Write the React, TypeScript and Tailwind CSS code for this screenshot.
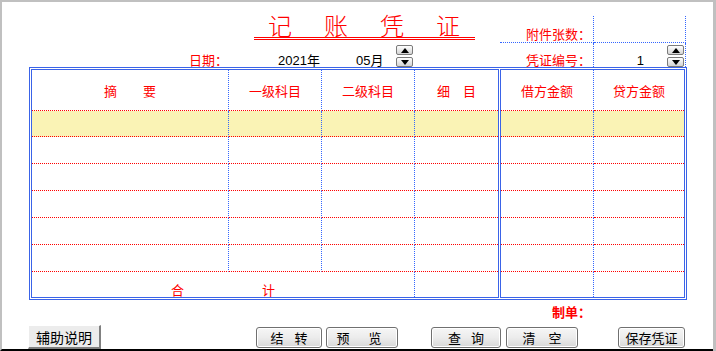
import React from "react";

// little up/down spinner used next to the month and the voucher number
function SpinBtn({ up }: { up?: boolean }) {
  return (
    <div className="h-[10px] w-[17px] rounded-[2px] border border-[#7a7a7a] bg-linear-to-b from-white to-[#d4d4d4] flex items-center justify-center">
      <svg width="8" height="5" viewBox="0 0 8 5">
        {up ? (
          <polygon points="0,5 8,5 4,0" fill="#000" />
        ) : (
          <polygon points="0,0 8,0 4,5" fill="#000" />
        )}
      </svg>
    </div>
  );
}

function Spin() {
  return (
    <div className="flex flex-col justify-between h-[22px] w-[17px]">
      <SpinBtn up />
      <SpinBtn />
    </div>
  );
}

function Btn({
  a,
  b,
  gap,
  w,
  ml,
  pr = "",
}: {
  a: string;
  b?: string;
  gap: string;
  w: string;
  ml: string;
  pr?: string;
}) {
  return (
    <button
      className={`${ml} ${w} mt-[2px] h-[21px] rounded-[3px] border border-[#707070] bg-linear-to-b from-[#f6f6f6] via-[#ececec] to-[#d8d8d8] shadow-[inset_0_0_0_1px_#ffffff] flex items-center justify-center pt-px text-[13px] leading-[13px] text-black ${gap} ${pr}`}
    >
      <span>{a}</span>
      {b && <span>{b}</span>}
    </button>
  );
}

const rowLine = "border-b border-dotted border-b-[#ff0000]";
const colLine = "border-r border-dotted border-r-[#3366ff]";

export default function App() {
  const bodyRows = [0, 1, 2, 3, 4, 5];

  return (
    <div className="w-[716px] h-[351px] flex bg-white font-['Liberation_Sans','Noto_Sans_CJK_SC',sans-serif] overflow-hidden">
      <div className="w-[713px] h-full flex flex-col border-t-2 border-l-2 border-t-[#c0c0c0] border-l-[#c0c0c0] border-b-2 border-b-black">
        {/* header */}
        <div className="flex h-[65px] shrink-0">
          <div className="w-[498px] flex flex-col">
            <div className="ml-[252px] mt-[13px] w-[221px] h-[25px] border-b-[3px] border-double border-[#ff0000] pl-[14px] text-[24px] leading-[24px] tracking-[32px] font-light text-[#ff0000] whitespace-nowrap">
              记账凭证
            </div>
            <div className="mt-[5px] h-[22px] flex items-end text-[13px] leading-[13px]">
              <span className="ml-[187px] w-[89px] text-[#ff0000]">日期：</span>
              <span className="w-[78px] text-black">2021年</span>
              <span className="w-[40px] text-black">05月</span>
              <Spin />
            </div>
          </div>

          <div className="mt-[14px] w-[186px] h-[51px] grid grid-cols-[94px_92px] grid-rows-[27px_24px] text-[13px] leading-[13px]">
            <div className={`${colLine} border-b border-b-[#3366ff] flex items-end pb-px pl-[26px] text-[#ff0000]`}>
              附件张数：
            </div>
            <div className={`${colLine} border-b border-b-[#3366ff]`} />
            <div className={`${colLine} flex items-end pl-[26px] text-[#ff0000]`}>
              凭证编号：
            </div>
            <div className={`${colLine} flex items-end`}>
              <span className="w-[50px] text-right text-black">1</span>
              <div className="ml-[23px]">
                <Spin />
              </div>
            </div>
          </div>
        </div>

        {/* voucher table */}
        <div className="ml-[27px] w-[658px] h-[233px] shrink-0 border border-[#3a63e8] p-px flex gap-px text-[13px] leading-[13px] text-[#ff0000]">
          <div className="w-[468px] h-full border border-[#3a63e8] grid grid-cols-[197px_93px_93px_83px] grid-rows-[41px_26px_27px_27px_27px_27px_27px_25px]">
            <div className={`${colLine} ${rowLine} flex items-center justify-center pt-[2px]`}>摘　　要</div>
            <div className={`${colLine} ${rowLine} flex items-center justify-center pt-[2px]`}>一级科目</div>
            <div className={`${colLine} ${rowLine} flex items-center justify-center pt-[2px]`}>二级科目</div>
            <div className={`${rowLine} flex items-center justify-center pt-[2px]`}>细　目</div>

            {bodyRows.map((r) => (
              <React.Fragment key={r}>
                <div className={`${colLine} ${rowLine} ${r === 0 ? "bg-[#faf3b5]" : ""}`} />
                <div className={`${colLine} ${rowLine} ${r === 0 ? "bg-[#faf3b5]" : ""}`} />
                <div className={`${colLine} ${rowLine} ${r === 0 ? "bg-[#faf3b5]" : ""}`} />
                <div className={`${rowLine} ${r === 0 ? "bg-[#faf3b5]" : ""}`} />
              </React.Fragment>
            ))}

            <div className={`col-span-3 ${colLine} overflow-hidden flex justify-center gap-[78px] pt-[12px]`}>
              <span>合</span>
              <span>计</span>
            </div>
            <div />
          </div>

          <div className="w-[185px] h-full border border-[#3a63e8] grid grid-cols-[93px_90px] grid-rows-[41px_26px_27px_27px_27px_27px_27px_25px]">
            <div className={`${colLine} ${rowLine} flex items-center justify-center pt-[2px]`}>借方金额</div>
            <div className={`${rowLine} flex items-center justify-center pt-[2px]`}>贷方金额</div>

            {bodyRows.map((r) => (
              <React.Fragment key={r}>
                <div className={`${colLine} ${rowLine} ${r === 0 ? "bg-[#faf3b5]" : ""}`} />
                <div className={`${rowLine} ${r === 0 ? "bg-[#faf3b5]" : ""}`} />
              </React.Fragment>
            ))}

            <div className={colLine} />
            <div />
          </div>
        </div>

        {/* maker */}
        <div className="h-[25px] shrink-0">
          <div className="ml-[550px] mt-[6px] text-[13px] leading-[13px] font-bold text-[#ff0000]">
            制单：
          </div>
        </div>

        {/* buttons */}
        <div className="h-[24px] shrink-0 flex items-start">
          <button className="ml-[26px] w-[73px] h-[24px] bg-[#ececec] border border-t-white border-l-white border-r-2 border-b-2 border-r-[#808080] border-b-[#808080] flex items-center justify-center pt-[2px] text-[14px] leading-[14px] text-black">
            辅助说明
          </button>
          <Btn a="结" b="转" gap="gap-[11px]" w="w-[66px]" ml="ml-[155px]" />
          <Btn a="预" b="览" gap="gap-[19px]" w="w-[72px]" ml="ml-[4px]" pr="pr-[6px]" />
          <Btn a="查" b="询" gap="gap-[10px]" w="w-[70px]" ml="ml-[33px]" />
          <Btn a="清" b="空" gap="gap-[13px]" w="w-[72px]" ml="ml-[5px]" />
          <Btn a="保存凭证" gap="" w="w-[67px]" ml="ml-[40px]" />
        </div>
      </div>
      <div className="w-[3px] h-full bg-[#c0c0c0]" />
    </div>
  );
}
